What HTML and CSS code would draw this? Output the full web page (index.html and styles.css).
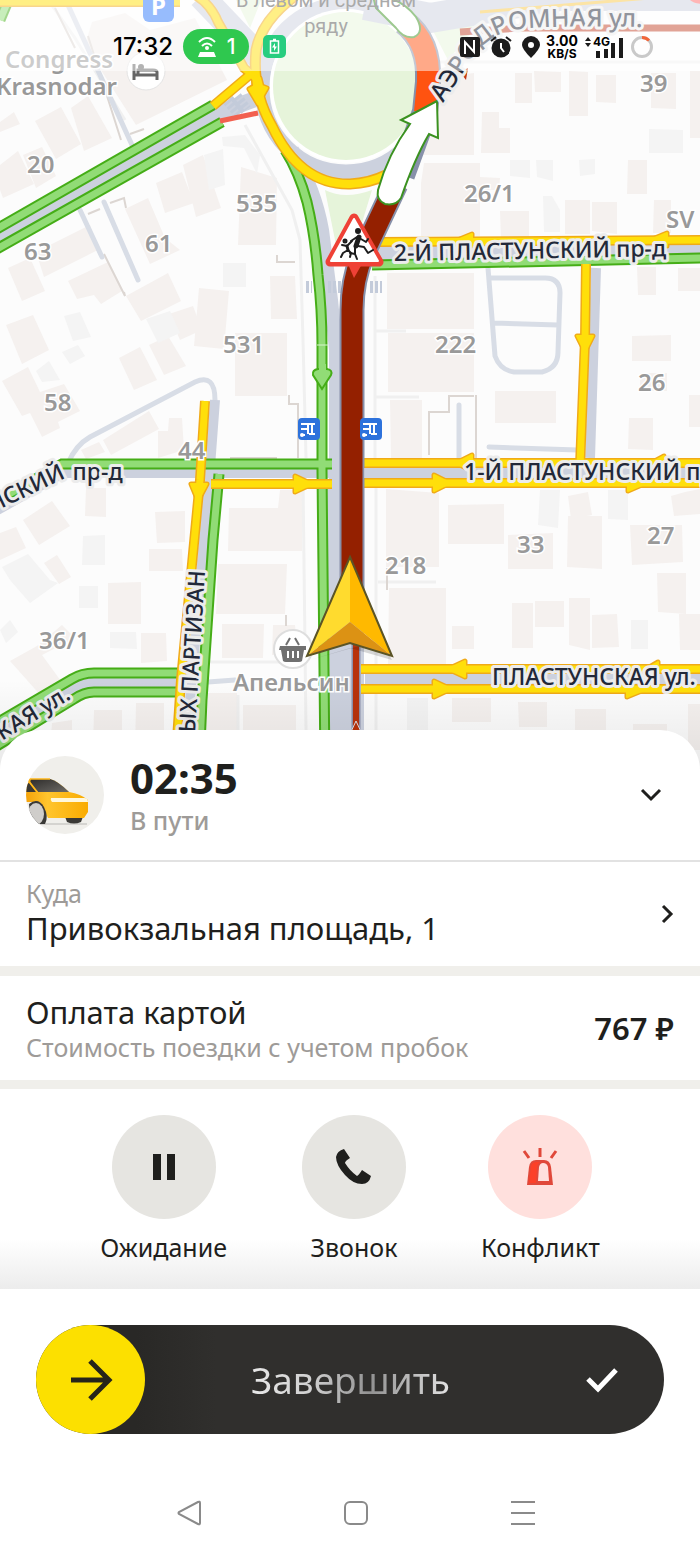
FILE: index.html
```html
<!DOCTYPE html>
<html lang="ru">
<head>
<meta charset="utf-8">
<meta name="viewport" content="width=device-width, initial-scale=1">
<title>Поездка</title>
<link rel="stylesheet" href="styles.css">
</head>
<body>
<main class="app">
  <section class="map-area" aria-label="Карта">
    <svg class="map" viewBox="0 0 700 770" preserveAspectRatio="xMidYMax slice">
      <defs>
        <g id="yellow-roads">
          <path d="M-5 2H180"/>
          <path d="M190-8Q210 2 218 22L244 68L256 78"/>
          <path d="M213 106L252 73"/>
          <path d="M376 242L705 240"/>
          <path d="M586 264L585 340L580 466"/>
          <path d="M360 463H705M360 483H705"/>
          <path d="M205 401L200 480L181 680L177 740"/>
          <path d="M211 484H332"/>
          <path d="M361 669H705M361 689H705"/>
        </g>
        <path id="ring-road" d="M295-4Q262 20 256 50Q252 92 272 126Q300 185 350 184Q370 183 386 175"/>
        <g id="green-roads">
          <path d="M-5 230L213 105M-5 250L222 122"/>
          <path d="M285 150Q299 172 307 202Q315 235 318 275Q322 310 322 345V470L325 770"/>
          <path d="M372 265L705 258"/>
          <path d="M332 464H62L-5 502"/>
          <path d="M219 474L213 540L202 700L199 770"/>
          <path d="M182 673H94Q82 673 72 679L-5 724"/>
          <path d="M182 692H94Q84 692 74 699L-5 747"/>
          <path d="M10-4L0 20"/>
        </g>
        <g id="yellow-arrows">
          <path d="M258 104L249 89L254 86L254 78H260L262 86L267 88Z"/>
          <path d="M456 463L472 455V471Z"/>
          <path d="M450 483L434 475V491Z"/>
          <path d="M455 241L472 234V246Z M650 240L667 233V246Z"/>
          <path d="M585 352L577 336H593Z"/>
          <path d="M651 463L664 456V463Z M644 484L628 480V491Z"/>
          <path d="M198 501L191 484H207Z"/>
          <path d="M312 484L295 476V492Z"/>
          <path d="M448 669L465 661V677Z"/>
          <path d="M646 669L658 662V671Z M644 690L627 686V697Z"/>
          <path d="M451 689L434 681V697Z"/>
        </g>
      </defs>

      <rect width="700" height="770" fill="#fcfcfc"/>

      <g class="house">
        <path d="M92 22L125 13L150 30L195 18L227 80L136 125L85 45Z"/>
        <path d="M0 165L18 151L34 184L3 198L0 190Z M23 155L42 147L56 176L36 188Z"/>
        <path d="M35 121L61 107L81 144L56 159Z M71 108L88 96L112 138L84 151Z"/>
        <path d="M0 122L14 112L20 124L0 132Z"/>
        <path d="M156 183L182 172L194 203L165 213Z M183 165L203 155L221 208L196 217Z"/>
        <path d="M241 167L277 178L276 245H238Z M125 209L148 198L165 238L180 250L150 264Z"/>
        <path d="M36 252L90 225L98 250L44 277Z M8 268L30 258L45 291L22 301Z"/>
        <path d="M68 281L108 262L122 291L101 304L94 295L77 299Z"/>
        <path d="M126 296L168 273L181 301L141 321Z M169 314L193 306L202 330L180 340Z"/>
        <path d="M199 288L229 291L224 349L194 346Z M270 276L295 276L297 319L271 319Z"/>
        <path d="M6 325L33 315L49 350L22 364Z M119 358L140 347L157 380L134 390Z M149 345L168 336L186 366L164 375Z"/>
        <path d="M2 381L28 367L40 392L64 384L80 411L58 422L60 428L42 437L30 413L22 416Z"/>
        <path d="M235 333H287V396H235Z M103 440L149 411L159 429L111 455Z M158 431L168 431L169 418H182L184 450L158 458Z"/>
        <path d="M81 450L99 442L105 452L86 459Z M240 243H275V245H240Z"/>
        <path d="M23 520L52 501L70 526L39 545Z M86 488H106V517L85 516Z M0 533L16 527L26 548L0 560Z"/>
        <path d="M44 563L57 555L71 577L59 584Z M108 583L141 582V624H108Z M155 512L185 511V542L157 543Z M149 549H182L183 571H149Z"/>
        <path d="M229 508L278 508L280 490H302V551H228Z M218 564H287L285 614L216 614Z M222 624H264L263 658H222Z M273 625H295L298 655H272Z"/>
        <path d="M141 633H166L167 661L141 663Z M10 661L37 646L62 625L75 638L42 655L66 688L43 698Z"/>
        <path d="M94 710H122V750H93Z M136 703H164V750H135Z M208 693H237V745H206Z M243 705H296V750H243Z M52 723L72 720V750H50Z"/>
        <path d="M420 80L474 73V155H422Z M515 73H532V103H515Z M534 71L561 72V92H535Z M569 71L588 72V116H569Z M596 75H616V103L596 102Z M651 73H676V109L651 108Z M690 71H700V138H690Z"/>
        <path d="M482 112H499V128H510V153H481Z M628 160H647V194H627Z M424 163H480V177L500 178L499 190H480V236H421V183Z"/>
        <path d="M592 202H617V234L592 231Z M565 200H590V234H565Z M654 200H671V233H653Z M500 211H529V239H501Z"/>
        <path d="M387 273H474V329H387Z M388 333H474V392H388Z M390 400H422V458H391Z M495 391H556V423H495Z M637 267H656V295H638Z M678 268H700V291H678Z"/>
        <path d="M632 336L671 335V361H632Z M629 418H653V450L628 449Z M640 373H667V391H640Z M689 395H700V427H689Z"/>
        <path d="M386 489L439 493V567H386Z M389 588H446V664H388Z M448 505L504 504V544H448Z M508 535L553 533V569H508Z M568 516H602V569L567 567Z"/>
        <path d="M568 496L588 492L592 515L571 519Z M630 525H682L683 562L632 565Z M671 496L685 492L700 489V514L674 516Z M657 573H686V614L658 612Z"/>
        <path d="M512 603H533V648H512Z M535 601H564V627H535Z M569 598H590V650L569 645Z M592 615L617 614L619 647L592 648Z M679 614H700V650H680Z"/>
        <path d="M452 626H474V649H452Z M452 698H491V722H452Z M518 702H547V727H519Z M575 709H606V745H575Z M633 724H667V750H633Z M688 704H700V750H688Z"/>
      </g>
      <g class="shed">
        <path d="M204 155L223 149L225 185L209 190Z M222 137L245 135L260 155L257 174L244 148L223 146Z"/>
        <path d="M64 316L80 312L91 337L73 341Z M62 352L78 345L85 356L70 364Z M36 371L49 361L60 380L42 382Z M146 319L170 311L180 333L158 343Z M223 263H246V287H223Z"/>
        <path d="M83 536L105 535V565L82 565Z M2 567L28 554L50 580L58 583L30 603L10 580Z M79 586H98V608H79Z M110 632H136L137 649L110 648Z M0 630L10 620L18 632L6 643Z"/>
        <path d="M649 129L683 130V153H649Z M510 160H530V178L510 176Z M536 160H553V181L537 177Z M579 160L595 159V174L580 176Z M543 196H552L560 210V232H544Z"/>
        <path d="M540 490H560L558 528L538 525Z M608 490H628V520L608 519Z M631 620H648V649H631Z M407 698H428V750H407Z"/>
      </g>

      <path class="footway" d="M48 0L75 38L125 120M245 125L292 210L300 240L303 340L306 458M303 480L306 730M375 276V458M376 331H406M375 397H419M376 480V730M378 582H436M210 662H305M238 695V735M420 73L380 205M425 62H700"/>
      <path class="fence" d="M55 8L75 48M88 36L121 140M130 134L144 129M88 214L100 209M110 203L124 198L126 208M104 254L125 296L124 292M277 255V262H295M289 395V404H298V458M429 455V412H449V396H474M476 395V458M230 458H277M286 615V626M387 568V590"/>

      <g class="lane">
        <path d="M68 5L132 145M80 210L102 257M104 202L138 280"/>
        <path d="M68 463Q76 445 90 437L195 382Q215 373 215 400"/>
        <path d="M488 268L495 356Q500 370 514 372H542Q558 368 558 352L560 293Q560 278 545 278H491M493 323L558 325"/>
        <path d="M459 405V458M489 447L578 450M208 682L235 680"/>
      </g>

      <path class="park" d="M325 190Q345 200 372 190L350 262L340 265Z"/>
      <path class="park" d="M235-2H262L250 28Z M425 15L487 14L448 60L430 25Z"/>
      <circle class="ring" cx="346" cy="88" r="84"/>
      <ellipse cx="346" cy="86" rx="76" ry="77" fill="#fff"/>
      <ellipse class="park" cx="346" cy="86" rx="73" ry="74"/>

      <g class="road">
        <path stroke-width="16" d="M-5 240L218 113L258 98"/>
        <path stroke-width="14" d="M292 150Q315 190 322 230L331 300L336 350V500"/>
        <path stroke-width="38" d="M345 480V770"/>
        <path stroke-width="28" d="M346 400V510M346 500V330"/>
        <path stroke-width="22" d="M376 253L705 248"/>
        <path stroke-width="18" d="M365 473H705M365 679H705"/>
        <path stroke-width="16" d="M330 470H62L-5 508"/>
        <path stroke-width="10" d="M215 400L209 480L190 700M596 268L590 458"/>
        <path stroke-width="16" d="M182 682H88L-5 738"/>
        <path stroke-width="30" d="M365 5L430 18L560-4H705"/>
        <path stroke-width="26" d="M201-4L260 58"/>
      </g>
      <path class="crossing" d="M228 100L240 114M236 97L246 110M306 287H312M328 287H345M370 287H382"/>

      <use href="#green-roads" class="green-case"/>
      <use href="#green-roads" class="green-fill"/>
      <use href="#ring-road" class="ring-case"/>
      <use href="#yellow-roads" class="yellow-case"/>
      <use href="#yellow-arrows" class="arrow-case"/>
      <use href="#ring-road" class="ring-fill"/>
      <use href="#yellow-roads" class="yellow-fill"/>
      <use href="#yellow-arrows" class="arrow-fill"/>
      <path class="green-arrow" d="M322 389L313 375Q312 370 318 369H327Q333 370 331 375Z"/>
      <path d="M319 364H326V372H319Z" fill="#91dc76"/>
      <path d="M220 121L258 113" fill="none" stroke="#f2604f" stroke-width="5"/>
      <path d="M317 345H328" stroke="#d6f5cb" stroke-width="1"/>
      <path d="M460 32L520 28L705 28" fill="none" stroke="#c2462c" stroke-width="7"/>
      <path d="M480 12L650-2" fill="none" stroke="#f9c84a" stroke-width="3"/>
      <path d="M690 0Q694 4 705 4V-2H690Z" fill="#ff6b6b"/>

      <g fill="none">
        <path d="M352 612V310Q352 280 363 254L396 184" stroke="#8790aa" stroke-width="25"/>
        <path d="M352 612V310Q352 280 363 254L396 184" stroke="#942000" stroke-width="21"/>
        <path d="M356 770V640" stroke="#8c91ab" stroke-width="9"/>
        <path d="M356 770V640" stroke="#b8320b" stroke-width="6"/>
        <path d="M404 22Q430 42 428 82L425 112L402 175" stroke="#8790aa" stroke-width="26"/>
        <path d="M404 22Q430 42 428 82L425 112" stroke="#ff5310" stroke-width="22"/>
        <path d="M460 72L468 68L466 80Z" fill="#c23513"/>
      </g>
      <path d="M349 736L356 721L363 736Z" fill="#b8320b" stroke="#dfe3ee"/>

      <path class="route-arrow" d="M373-4Q400-4 416 17Q425 32 414 37Q404 39 396 28L376 8Z"/>
      <path class="route-arrow" d="M437 101L438 138L429 134Q415 158 401 198Q396 206 385 204Q376 200 378 190Q388 154 410 124L401 120Z"/>

      <g class="place-text">
        <text x="27" y="173">20</text><text x="24" y="260">63</text><text x="145" y="252">61</text>
        <text x="236" y="212">535</text><text x="223" y="353">531</text><text x="44" y="411">58</text>
        <text x="178" y="459">44</text><text x="39" y="649">36/1</text><text x="640" y="92">39</text>
        <text x="464" y="202">26/1</text><text x="666" y="228">SV</text><text x="435" y="353">222</text>
        <text x="638" y="391">26</text><text x="385" y="574">218</text><text x="517" y="553">33</text>
        <text x="647" y="544">27</text>
        <text x="5" y="68">Congress</text><text x="-4" y="95">Krasnodar</text>
        <text x="233" y="691">Апельсин</text>
      </g>

      <path id="aero" d="M443 103L474 56Q487 37 512 30Q550 24 680 28" fill="none"/>
      <path id="nski" d="M-8 513L61 480H180" fill="none"/>
      <path id="kaya" d="M2 741L110 675" fill="none"/>
      <path id="part" d="M195 733L207 540" fill="none"/>
      <g class="street-text">
        <text x="394" y="261" transform="rotate(-1 394 261)">2-Й ПЛАСТУНСКИЙ пр-д</text>
        <text x="464" y="480">1-Й ПЛАСТУНСКИЙ пр-д</text>
        <text x="492" y="685">ПЛАСТУНСКАЯ ул.</text>
        <text class="wide-street"><textPath href="#aero">АЭРОДРОМНАЯ ул.</textPath></text>
        <text><textPath href="#nski">НСКИЙ пр-д</textPath></text>
        <text><textPath href="#kaya">КАЯ ул.</textPath></text>
        <text><textPath href="#part">ЫХ ПАРТИЗАН</textPath></text>
      </g>

      <!-- parking, hotel, shop and bus stop marks -->
      <rect x="143" y="-9" width="31" height="31" rx="6" fill="#2f78fa"/>
      <text x="151" y="15" class="parking-text">P</text>
      <circle cx="146" cy="71" r="19" fill="#fff" stroke="#e4e4e4"/>
      <path d="M134 64V80M134 75H157V80M157 74V72Q157 70 153 70H138V74" fill="none" stroke="#666" stroke-width="3"/><circle cx="141" cy="67" r="3" fill="#666"/>
      <circle cx="293" cy="649" r="19" fill="#fff" stroke="#dedede" stroke-width="2"/>
      <path d="M280 646H306V650H304L302 661Q301 662 299 662H286Q284 662 283 661L281 650H279Z" fill="#707070"/>
      <path d="M286 645L290 638M299 645L295 638" stroke="#707070" stroke-width="2"/>
      <path d="M288 651V658M293 651V658M298 651V658" stroke="#fff" stroke-width="2"/>
      <g id="bus">
        <rect x="298" y="418" width="22" height="22" rx="4" fill="#2d72dc"/>
        <path d="M301 424H315M301 435H305M308 424V434M309 434H315M312 424V434M301 429H307" stroke="#fff" stroke-width="2"/>
        <circle cx="302" cy="435" r="2" fill="#fff"/>
      </g>
      <use href="#bus" x="62"/>

      <!-- children warning sign -->
      <path d="M354 278L348 264H362Z" fill="#ef4136"/>
      <path d="M354 218L379 262H330Z" fill="#fff" stroke="#ef4136" stroke-width="9" stroke-linejoin="round"/>
      <path d="M354 219L378 261H331Z" fill="#fff" stroke="#fff" stroke-width="2" stroke-linejoin="round"/>
      <g fill="none" stroke="#1d1d1d" stroke-linecap="round" stroke-linejoin="round">
        <circle cx="358" cy="231" r="2" fill="#1d1d1d" stroke-width="2"/>
        <path d="M359 237L356 246" stroke-width="5"/>
        <path d="M357 237L351 241M361 239L366 242L368 239M358 246L364 247L368 253L373 250M355 247V254L350 253M355 254L357 259" stroke-width="2"/>
        <circle cx="345" cy="241" r="1" fill="#1d1d1d" stroke-width="3"/>
        <path d="M347 246L348 250" stroke-width="3"/>
        <path d="M342 245L347 246L352 241M348 250L343 253L341 257M348 250L351 253L350 257" stroke-width="2"/>
      </g>

      <!-- current position -->
      <path class="cursor-shade" d="M310 660L350 648L392 660L380 640Z"/>
      <path d="M350 557L307 656L350 622Z" fill="#ffdb2e"/>
      <path d="M350 557L392 656L350 622Z" fill="#ffb900"/>
      <path d="M350 622L392 656L350 643L307 656Z" fill="#dc9214"/>
      <path d="M350 557L392 656L350 643L307 656Z" fill="none" stroke="#5b5426" stroke-width="2"/>

      <text class="hint-text" x="326" y="7">В левом и среднем</text>
      <text class="hint-text" x="326" y="33">ряду</text>
    </svg>

    <header class="status">
      <span class="clock">17:32</span>
      <span class="hotspot">
        <svg width="20" height="22" viewBox="0 0 20 22"><path d="M2 6Q10-2 18 6M5 10Q10 5 15 10" fill="none" stroke="#fff" stroke-width="2"/><circle cx="10" cy="12" r="2" fill="#fff"/><path d="M3 16H17L19 21H1Z" fill="#fff"/></svg>
        1
      </span>
      <svg class="charge" width="23" height="23" viewBox="0 0 23 23"><rect width="23" height="23" rx="5" fill="#27cd7f"/><path d="M7.500 6H15.500V18H7.500ZM10 4.500H13" fill="none" stroke="#fff" stroke-width="1.500"/><path d="M12 8L9 12.500H11V16L14 11.500H12Z" fill="#fff"/></svg>
      <span class="status-right">
        <span class="marks">
          <svg width="20" height="20" viewBox="0 0 20 20"><rect width="20" height="20" rx="2" fill="#1b1b1b"/><path d="M5 17V5L14 15V3" fill="none" stroke="#fff" stroke-width="2"/></svg>
          <svg width="22" height="22" viewBox="0 0 22 22"><circle cx="11" cy="12" r="9.500" fill="#1b1b1b"/><path d="M1 5L6 1M21 5L16 1" stroke="#1b1b1b" stroke-width="2"/><path d="M11 7V12L14 16" fill="none" stroke="#fff" stroke-width="2"/></svg>
          <svg width="18" height="22" viewBox="0 0 18 22"><path d="M9 22Q0 13 0 9A9 9 0 0 1 18 9Q18 13 9 22Z" fill="#1b1b1b"/><circle cx="9" cy="9" r="3" fill="#fff"/></svg>
        </span>
        <span class="speed"><b>3.00</b><b class="unit">KB/S</b></span>
        <span class="signal">
          <svg width="40" height="22" viewBox="0 0 40 22"><path d="M1 5L4 1L7 5ZM1 7L4 11L7 7Z M12 15H16V22H12ZM20 13H24V22H20ZM27 7H31V22H27ZM35 2H39V22H35Z" fill="#1b1b1b"/></svg>
          <b class="net">4G</b>
        </span>
        <svg width="24" height="24" viewBox="0 0 24 24"><circle cx="12" cy="12" r="9.500" fill="none" stroke="#c9c9c9" stroke-width="3"/><path d="M12 2.500A9.500 9.500 0 0 1 19 5.500" fill="none" stroke="#f2663a" stroke-width="3"/></svg>
      </span>
    </header>
  </section>

  <section class="sheet">
    <div class="row trip">
      <svg class="car" viewBox="0 0 78 78">
        <defs>
          <clipPath id="disc"><circle cx="39" cy="39" r="39"/></clipPath>
          <linearGradient id="paint" x1="0" y1="0" x2="1" y2="0"><stop offset="0" stop-color="#f5a30a"/><stop offset=".35" stop-color="#ffc52e"/><stop offset="1" stop-color="#f9ab00"/></linearGradient>
          <linearGradient id="glass" x1="0" y1="0" x2="1" y2="1"><stop offset="0" stop-color="#2e2c2a"/><stop offset="1" stop-color="#6d6b67"/></linearGradient>
        </defs>
        <g clip-path="url(#disc)">
          <rect width="78" height="78" fill="#f0efeb"/>
          <path d="M0 68H61" stroke="#b9b8b5"/>
          <path d="M38 58H58L55 66Q48 69 41 66Z" fill="#3a3936"/>
          <path d="M0 23H22Q30 23 43 36Q55 38 62 44V56L58 62H22L14 46H0Z" fill="url(#paint)"/>
          <path d="M5 23H24Q32 25 43 36H12L4 27Z" fill="url(#glass)"/>
          <path d="M0 28L3 27L10 36H0Z" fill="#3a3936"/>
          <path d="M0 23H24M2 24L12 37" fill="none" stroke="#ffb81a" stroke-width="1.500"/>
          <path d="M3 48Q12 41 18 51Q23 61 19 68H5Z" fill="#3a3936"/>
          <ellipse cx="10" cy="58" rx="8" ry="11" fill="#cfcdca"/>
          <path d="M25 42H58Q62 42 62 46H26Q24 44 25 42Z" fill="#fff8dc"/>
        </g>
      </svg>
      <div class="grow">
        <h1 class="timer">02:35</h1>
        <p class="state">В пути</p>
      </div>
      <button class="icon-button collapse" aria-label="Свернуть"><svg width="22" height="14" viewBox="0 0 22 14"><path d="M2 2L11 11L20 2" fill="none" stroke="#1f1f1d" stroke-width="3"/></svg></button>
    </div>

    <a class="row destination" href="#destination">
      <span class="grow">
        <span class="caption">Куда</span>
        <span class="title">Привокзальная площадь, 1</span>
      </span>
      <svg class="chevron" width="13" height="20" viewBox="0 0 13 20"><path d="M2 2L10 10L2 18" fill="none" stroke="#1f1f1d" stroke-width="3"/></svg>
    </a>

    <div class="row payment">
      <div class="grow">
        <p class="title">Оплата картой</p>
        <p class="caption">Стоимость поездки с учетом пробок</p>
      </div>
      <strong class="price">767 ₽</strong>
    </div>

    <div class="actions">
      <button class="action"><span class="disc"><svg width="24" height="26" viewBox="0 0 24 26"><path d="M1 0H9V26H1ZM15 0H23V26H15Z" fill="#1f1f1d"/></svg></span>Ожидание</button>
      <button class="action"><span class="disc"><svg width="36" height="36" viewBox="0 0 36 36"><path d="M8 0L14 9Q9 12 9 14Q14 22 21 27Q23 26 26 21L35 27Q33 35 26 35Q17 35 9 26Q0 16 0 8Q1 2 8 0Z" fill="#1f1f1d"/></svg></span>Звонок</button>
      <button class="action"><span class="disc alert"><svg width="36" height="38" viewBox="0 0 36 38"><path d="M2 3L7 10M18 0V9M34 3L29 10" fill="none" stroke="#e0483a" stroke-width="3"/><path d="M5 37L7 19Q8 12 14 12H22Q28 12 29 19L31 37Z" fill="#e0483a"/><path d="M7 35L9 18Q10 14 15 14H18Q15 16 15 20L14 35Z" fill="#fc4028"/><path d="M16 33L17 19Q18 15 21 15Q25 15 26 19L27 33Z" fill="#ffe0dd"/></svg></span>Конфликт</button>
    </div>
  </section>

  <footer class="bottom">
    <button class="finish">
      <span class="knob"><svg width="44" height="42" viewBox="0 0 44 42"><path d="M2 21H40M21 2L40 21L21 40" fill="none" stroke="#26241a" stroke-width="5"/></svg></span>
      <span class="finish-label">Завершить</span>
      <svg width="32" height="26" viewBox="0 0 32 26"><path d="M2 12L12 22L30 3" fill="none" stroke="#fff" stroke-width="5"/></svg>
    </button>
    <nav class="system">
      <button class="icon-button" aria-label="Назад"><svg width="26" height="26" viewBox="0 0 26 26"><path d="M24 3V23Q24 25 22 24L3 14Q2 13 3 12L22 2Q24 1 24 3Z" fill="none" stroke="#8a8a8a" stroke-width="2"/></svg></button>
      <button class="icon-button" aria-label="Домой"><svg width="26" height="26" viewBox="0 0 26 26"><rect x="2" y="2" width="22" height="22" rx="5" fill="none" stroke="#8a8a8a" stroke-width="2"/></svg></button>
      <button class="icon-button" aria-label="Меню"><svg width="26" height="26" viewBox="0 0 26 26"><path d="M1 2H25M1 13H25M1 24H25" stroke="#8a8a8a" stroke-width="2"/></svg></button>
    </nav>
  </footer>
</main>
</body>
</html>
```
FILE: styles.css
```css
* { box-sizing: border-box; }

body {
  margin: 0;
  background: #fff;
  color: #1f1f1d;
  font-family: "Noto Sans", "Open Sans", sans-serif;
}

h1, p { margin: 0; }

button {
  padding: 0;
  border: 0;
  background: none;
  color: inherit;
  font: inherit;
}

svg { flex: none; }

.app {
  display: flex;
  flex-direction: column;
  min-height: 100vh;
}

/* Map */
.map-area { position: relative; }
.map { display: block; width: 100%; }

.house { fill: #f5f1ef; }
.shed { fill: #f4f4f4; }
.footway { fill: none; stroke: #f0f0f0; stroke-width: 3; }
.fence { fill: none; stroke: #dcd6d2; stroke-width: 2; }
.lane { fill: none; stroke: #d8dde6; stroke-width: 5; stroke-linecap: round; }
.park { fill: #e6f4da; }
.ring { fill: none; stroke: #ccd1de; stroke-width: 15; }
.road { fill: none; stroke: #ccd1de; }
.crossing { fill: none; stroke: #c3cbda; stroke-width: 12; stroke-dasharray: 3 2; }

.green-case { fill: none; stroke: #45ad17; stroke-width: 11; }
.green-fill { fill: none; stroke: #91dc76; stroke-width: 7; }
.ring-case { fill: none; stroke: #f0aa18; stroke-width: 11; }
.ring-fill { fill: none; stroke: #ffdf0a; stroke-width: 8; }
.yellow-case { fill: none; stroke: #f0aa18; stroke-width: 10; }
.yellow-fill { fill: none; stroke: #ffdf0a; stroke-width: 7; }
.arrow-case { fill: #f0aa18; stroke: #f0aa18; stroke-width: 5; stroke-linejoin: round; }
.arrow-fill { fill: #ffdf0a; stroke: #ffdf0a; stroke-width: 2; stroke-linejoin: round; }
.green-arrow { fill: #91dc76; stroke: #45ad17; stroke-width: 2; }
.route-arrow { fill: #fff; stroke: #3b9220; stroke-width: 2; }
.cursor-shade { fill: #000; opacity: .15; }

.place-text {
  fill: #999;
  stroke: #fff;
  stroke-width: 3px;
  paint-order: stroke;
  font-size: 24px;
  font-weight: 600;
}

.street-text {
  fill: #222838;
  stroke: #ececec;
  stroke-width: 6px;
  stroke-linejoin: round;
  paint-order: stroke;
  font-size: 23px;
  font-weight: 500;
}

.wide-street { font-size: 25px; }
.parking-text { fill: #fff; font-size: 24px; font-weight: 700; }
.hint-text { fill: #555; font-family: Roboto, sans-serif; font-size: 20px; text-anchor: middle; }

/* Status bar over the map */
.status {
  position: absolute;
  inset: 0 0 auto;
  display: flex;
  align-items: center;
  height: 71px;
  padding: 22px 46px 0 113px;
  background: rgba(255, 255, 255, .5);
  color: #000;
  font-family: Inter, sans-serif;
}

.clock { font-size: 24px; font-weight: 500; }

.hotspot {
  display: flex;
  align-items: center;
  justify-content: center;
  gap: 10px;
  width: 66px;
  height: 35px;
  margin: 0 14px 0 10px;
  border-radius: 18px;
  background: #2fc84f;
  color: #fff;
  font-size: 21px;
  font-weight: 500;
}

.status-right {
  display: flex;
  align-items: center;
  gap: 6px;
  margin-left: auto;
}

.marks { display: flex; align-items: center; gap: 10px; }
.speed { display: grid; justify-items: center; font-size: 14px; line-height: 13px; }
.unit { font-size: 12px; }
.signal { position: relative; display: flex; }
.net { position: absolute; top: 0; left: 9px; font-size: 12px; line-height: 12px; }

.map-area::after {
  content: "";
  position: absolute;
  inset: auto 0 0;
  height: 90px;
  background: linear-gradient(transparent, rgba(0, 0, 0, .08));
}

/* Trip sheet */
.sheet {
  position: relative;
  margin-top: -40px;
  overflow: hidden;
  border-radius: 40px 40px 0 0;
  background: #fff;
}

.row {
  display: flex;
  align-items: center;
  padding: 0 26px;
  color: inherit;
  text-decoration: none;
}

.grow { flex: 1; }
.trip { min-height: 132px; border-bottom: 2px solid #e2e2e2; }
.destination { min-height: 114px; border-bottom: 10px solid #f0efeb; }
.payment { min-height: 113px; border-bottom: 9px solid #f0efeb; }
.car { width: 78px; margin-right: 26px; }
.timer { padding-top: 2px; font-size: 42px; line-height: 48px; }
.state { color: #9e9b98; font-size: 25px; font-weight: 500; line-height: 36px; }
.collapse { padding: 12px; }
.title { display: block; font-size: 31px; line-height: 38px; }
.caption { display: block; color: #9e9b98; font-size: 25px; line-height: 32px; }
.destination .grow { padding-bottom: 4px; }
.price { font-size: 31px; font-weight: 600; }

.actions {
  display: flex;
  justify-content: center;
  gap: 75px;
  min-height: 200px;
  padding: 26px 16px 20px;
  background: linear-gradient(transparent 75%, #ececec);
}

.action {
  display: flex;
  flex-direction: column;
  align-items: center;
  gap: 10px;
  font-size: 25px;
  line-height: 36px;
}

.disc {
  display: grid;
  place-items: center;
  width: 104px;
  height: 104px;
  border-radius: 50%;
  background: #e6e5e1;
}

.alert { background: #ffe0dd; }

/* Finish control and system keys */
.bottom { padding: 36px 36px 30px; }

.finish {
  display: flex;
  align-items: center;
  width: 100%;
  padding-right: 46px;
  border-radius: 55px;
  background: linear-gradient(90deg, #292826 100px, #302f2d 180px);
}

.knob {
  display: grid;
  place-items: center;
  width: 109px;
  height: 109px;
  margin-right: -30px;
  border-radius: 50%;
  background: #fce000;
}

.finish-label {
  margin: 0 auto;
  background: linear-gradient(90deg, #e8e8e8, #d0d0d0 30%, #929292 60%, #e2e2e2);
  background-clip: text;
  color: transparent;
  font-size: 37px;
}

.system {
  display: flex;
  justify-content: center;
  gap: 141px;
  padding-top: 66px;
  padding-left: 12px;
}

.icon-button { display: grid; place-items: center; }
```
